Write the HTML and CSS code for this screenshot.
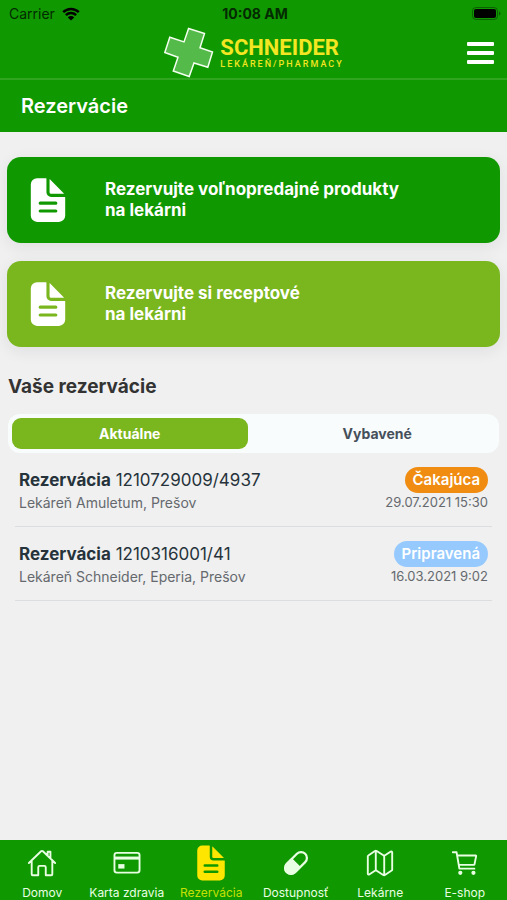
FILE: index.html
```html
<!DOCTYPE html>
<html lang="sk">
<head>
    <meta charset="UTF-8">
    <meta name="viewport" content="width=device-width, initial-scale=1.0">
    <title>Rezervácie</title>
    <link rel="stylesheet" href="styles.css">
</head>
<body>
    <!-- Shared icon -->
    <svg class="sprite" aria-hidden="true">
        <symbol id="document" viewBox="0 0 512 512">
            <path d="M428 224H288a48 48 0 01-48-48V36a4 4 0 00-4-4h-92a64 64 0 00-64 64v320a64 64 0 0064 64h224a64 64 0 0064-64V228a4 4 0 00-4-4zm-92 160H176a16 16 0 010-32h160a16 16 0 010 32zm0-80H176a16 16 0 010-32h160a16 16 0 010 32z"/>
            <path d="M419.22 188.59L275.41 44.78a2 2 0 00-3.41 1.41V176a16 16 0 0016 16h129.81a2 2 0 001.41-3.41z"/>
        </symbol>
    </svg>

    <div class="app">
        <header class="app-header">
            <div class="status-bar">
                <div class="carrier">
                    <span>Carrier</span>
                    <svg class="wifi" viewBox="0 0 18 14" aria-hidden="true">
                        <path d="M1.2 5.2a11.2 11.2 0 0115.6 0M3.9 8.1a7.3 7.3 0 0110.2 0" fill="none" stroke="currentColor" stroke-width="2.5"/>
                        <path d="M9 13.6L5.8 10.4a4.5 4.5 0 016.4 0z" fill="currentColor"/>
                    </svg>
                </div>
                <div class="time">10:08 AM</div>
                <div class="battery-wrap">
                    <svg class="battery" viewBox="0 0 29 13" aria-hidden="true">
                        <rect x=".5" y=".5" width="25" height="12" rx="3.5" fill="none" stroke="#000" stroke-opacity=".35"/>
                        <rect x="2" y="2" width="22" height="9" rx="2"/>
                        <path d="M27 4.5c2 .8 2 3.2 0 4z" fill-opacity=".4"/>
                    </svg>
                </div>
            </div>
            <div class="brand-bar">
                <div class="logo">
                    <svg class="logo-cross" viewBox="0 0 52 52" aria-hidden="true">
                        <path d="M25.6 1.5L41.5 6.5 37 20.7 49.5 25 44.8 40.3 31 36 26.2 49.5 10.3 44 15 30.3 1.8 25.5 6.8 10.2 21 14.9z" fill="#54bb4b" stroke="#f4fff0" stroke-width="1.5"/>
                    </svg>
                    <div class="logo-text">
                        <span class="logo-name">SCHNEIDER</span>
                        <span class="logo-tagline">LEKÁREŇ/PHARMACY</span>
                    </div>
                </div>
                <button class="menu-button" type="button" aria-label="Menu">
                    <span></span>
                    <span></span>
                    <span></span>
                </button>
            </div>
            <h1 class="page-title">Rezervácie</h1>
        </header>

        <main class="content">
            <button class="action-card" type="button">
                <svg class="action-icon" aria-hidden="true"><use href="#document"/></svg>
                <span>Rezervujte voľnopredajné produkty<br>na lekárni</span>
            </button>
            <button class="action-card light" type="button">
                <svg class="action-icon" aria-hidden="true"><use href="#document"/></svg>
                <span>Rezervujte si receptové<br>na lekárni</span>
            </button>

            <h2 class="section-title">Vaše rezervácie</h2>

            <div class="tabs">
                <button class="tab active" type="button">Aktuálne</button>
                <button class="tab" type="button">Vybavené</button>
            </div>

            <ul class="reservations">
                <li class="reservation">
                    <div>
                        <div class="reservation-name"><b>Rezervácia</b> 1210729009/4937</div>
                        <div class="reservation-place">Lekáreň Amuletum, Prešov</div>
                    </div>
                    <div class="reservation-side">
                        <span class="badge waiting">Čakajúca</span>
                        <span class="reservation-date">29.07.2021 15:30</span>
                    </div>
                </li>
                <li class="reservation">
                    <div>
                        <div class="reservation-name"><b>Rezervácia</b> 1210316001/41</div>
                        <div class="reservation-place">Lekáreň Schneider, Eperia, Prešov</div>
                    </div>
                    <div class="reservation-side">
                        <span class="badge ready">Pripravená</span>
                        <span class="reservation-date">16.03.2021 9:02</span>
                    </div>
                </li>
            </ul>
        </main>

        <!-- Bottom navigation -->
        <nav class="bottom-nav">
            <a class="nav-item" href="#">
                <svg class="nav-icon" viewBox="0 0 512 512" aria-hidden="true">
                    <path d="M80 212v236a16 16 0 0016 16h96V328a24 24 0 0124-24h80a24 24 0 0124 24v136h96a16 16 0 0016-16V212M480 256L266.89 52c-5-5.28-16.69-5.34-21.78 0L32 256M400 179V64h-48v69"/>
                </svg>
                <span>Domov</span>
            </a>
            <a class="nav-item" href="#">
                <svg class="nav-icon" viewBox="0 0 512 512" aria-hidden="true">
                    <rect x="42" y="84" width="428" height="336" rx="40"/>
                    <path d="M42 172h428" stroke-width="52" stroke-linecap="butt"/>
                    <path d="M132 300h56v26h-56z" stroke-width="50" stroke-linejoin="miter"/>
                </svg>
                <span>Karta zdravia</span>
            </a>
            <a class="nav-item active" href="#" aria-current="page">
                <svg class="nav-icon" aria-hidden="true"><use href="#document"/></svg>
                <span>Rezervácia</span>
            </a>
            <a class="nav-item" href="#">
                <svg class="nav-icon" viewBox="0 0 512 512" aria-hidden="true">
                    <g transform="rotate(-45 256 256)">
                        <rect x="34" y="156" width="444" height="200" rx="100" stroke-width="38"/>
                        <path d="M250 156H134a100 100 0 000 200h116z" fill="currentColor"/>
                    </g>
                </svg>
                <span>Dostupnosť</span>
            </a>
            <a class="nav-item" href="#">
                <svg class="nav-icon" viewBox="0 0 512 512" aria-hidden="true">
                    <path d="M313.27 124.64L198.73 51.36a32 32 0 00-29.28.35L56.51 127.49A16 16 0 0048 141.63v295.8a16 16 0 0023.49 14.14l97.82-63.79a32 32 0 0129.5-.24l111.86 73a32 32 0 0029.27-.11l115.43-75.94a16 16 0 008.63-14.2V74.57a16 16 0 00-23.49-14.14l-98 63.86a32 32 0 01-29.24.35zM328 128v336M184 48v336"/>
                </svg>
                <span>Lekárne</span>
            </a>
            <a class="nav-item" href="#">
                <svg class="nav-icon" viewBox="0 0 512 512" aria-hidden="true">
                    <circle cx="176" cy="424" r="20" fill="currentColor"/>
                    <circle cx="400" cy="424" r="20" fill="currentColor"/>
                    <path d="M48 72h64l48 280h256M160 288h249.44a8 8 0 007.85-6.43l28.8-144a8 8 0 00-7.85-9.57H128"/>
                </svg>
                <span>E-shop</span>
            </a>
        </nav>
    </div>
</body>
</html>
```

FILE: styles.css
```css
/* Base Styles */
* {
    margin: 0;
    padding: 0;
    box-sizing: border-box;
}

body {
    background: #f0f0f0;
    color: #26333b;
    font-family: Inter, "Liberation Sans", sans-serif;
}

button {
    border: none;
    background: none;
    font: inherit;
    color: inherit;
    cursor: pointer;
}

.sprite {
    display: none;
}

.app {
    display: flex;
    flex-direction: column;
    min-height: 100vh;
}

/* Header */
.app-header {
    background: #109800;
    color: white;
}

.status-bar {
    display: grid;
    grid-template-columns: 1fr auto 1fr;
    align-items: center;
    height: 27px;
    padding: 0 6px 0 9px;
    color: #032a00;
    font-size: 14px;
}

.carrier {
    display: flex;
    align-items: center;
    gap: 7px;
}

.wifi {
    width: 18px;
    height: 14px;
    color: black;
}

.time {
    font-weight: 700;
}

.battery-wrap {
    display: flex;
    justify-content: flex-end;
}

.battery {
    width: 29px;
    height: 13px;
}

.brand-bar {
    display: grid;
    grid-template-columns: 1fr auto 1fr;
    align-items: center;
    height: 53px;
    padding: 0 13px;
    border-bottom: 2px solid #2fa520;
}

.logo {
    grid-column: 2;
    display: flex;
    align-items: center;
    gap: 5px;
}

.logo-cross {
    width: 52px;
    height: 52px;
}

.logo-text {
    display: flex;
    flex-direction: column;
    color: #f3e622;
    font-family: Roboto, "Liberation Sans", sans-serif;
}

.logo-name {
    font-size: 22px;
    font-weight: 700;
    line-height: 22px;
}

.logo-tagline {
    font-size: 9px;
    font-weight: 500;
    line-height: 10px;
    letter-spacing: 2px;
}

.menu-button {
    justify-self: end;
    display: flex;
    flex-direction: column;
    gap: 5px;
}

.menu-button span {
    width: 27px;
    height: 4px;
    border-radius: 1px;
    background: white;
}

.page-title {
    padding: 0 21px;
    font-size: 20px;
    font-weight: 600;
    line-height: 52px;
}

/* Content */
.content {
    flex: 1;
    padding: 25px 7px;
}

.action-card {
    display: flex;
    align-items: center;
    gap: 32px;
    width: 100%;
    margin-bottom: 18px;
    padding: 18px 16px;
    border-radius: 14px;
    background: #109800;
    box-shadow: 0 4px 16px rgba(40, 20, 60, 0.08);
    color: white;
    font-size: 17px;
    font-weight: 700;
    line-height: 21px;
    text-align: left;
}

.action-card.light {
    background: #7ab61d;
}

.action-icon {
    flex: none;
    width: 50px;
    height: 50px;
    fill: currentColor;
}

.section-title {
    margin: 28px 1px 15px;
    color: #333;
    font-size: 19px;
    font-weight: 700;
    line-height: 24px;
}

/* Tabs */
.tabs {
    display: flex;
    gap: 12px;
    margin: 0 1px;
    padding: 4px;
    border-radius: 12px;
    background: #f8fcfd;
}

.tab {
    flex: 1;
    height: 31px;
    border-radius: 9px;
    color: #46505a;
    font-size: 14px;
    font-weight: 700;
}

.tab.active {
    background: #7ab61d;
    color: white;
}

/* Reservations */
.reservations {
    padding: 0 8px;
    list-style: none;
}

.reservation {
    display: flex;
    justify-content: space-between;
    padding: 14px 4px;
    border-bottom: 1px solid #dcdddf;
}

.reservation-name {
    font-size: 17px;
    line-height: 26px;
}

.reservation-name b {
    font-weight: 700;
}

.reservation-place {
    color: #65696e;
    font-size: 14px;
    line-height: 19px;
}

.reservation-side {
    display: flex;
    flex-direction: column;
    align-items: flex-end;
}

.badge {
    padding: 0 8px;
    border-radius: 13px;
    color: white;
    font-size: 15px;
    font-weight: 600;
    line-height: 26px;
}

.badge.waiting {
    background: #f08c12;
}

.badge.ready {
    background: #96caff;
}

.reservation-date {
    color: #65696e;
    font-size: 13px;
    line-height: 19px;
}

/* Bottom navigation */
.bottom-nav {
    position: sticky;
    bottom: 0;
    display: grid;
    grid-template-columns: repeat(6, 1fr);
    height: 60px;
    background: #109800;
}

.nav-item {
    display: flex;
    flex-direction: column;
    align-items: center;
    justify-content: flex-end;
    color: #e9ffe4;
    font-size: 12px;
    line-height: 15px;
    text-decoration: none;
    white-space: nowrap;
}

.nav-icon {
    width: 30px;
    height: 30px;
    margin-bottom: 7px;
    fill: none;
    stroke: currentColor;
    stroke-width: 32;
    stroke-linecap: round;
    stroke-linejoin: round;
}

.nav-item.active {
    color: #c6e000;
}

.nav-item.active .nav-icon {
    width: 40px;
    height: 40px;
    margin-bottom: 2px;
    fill: #ffe600;
    stroke: none;
}
```
